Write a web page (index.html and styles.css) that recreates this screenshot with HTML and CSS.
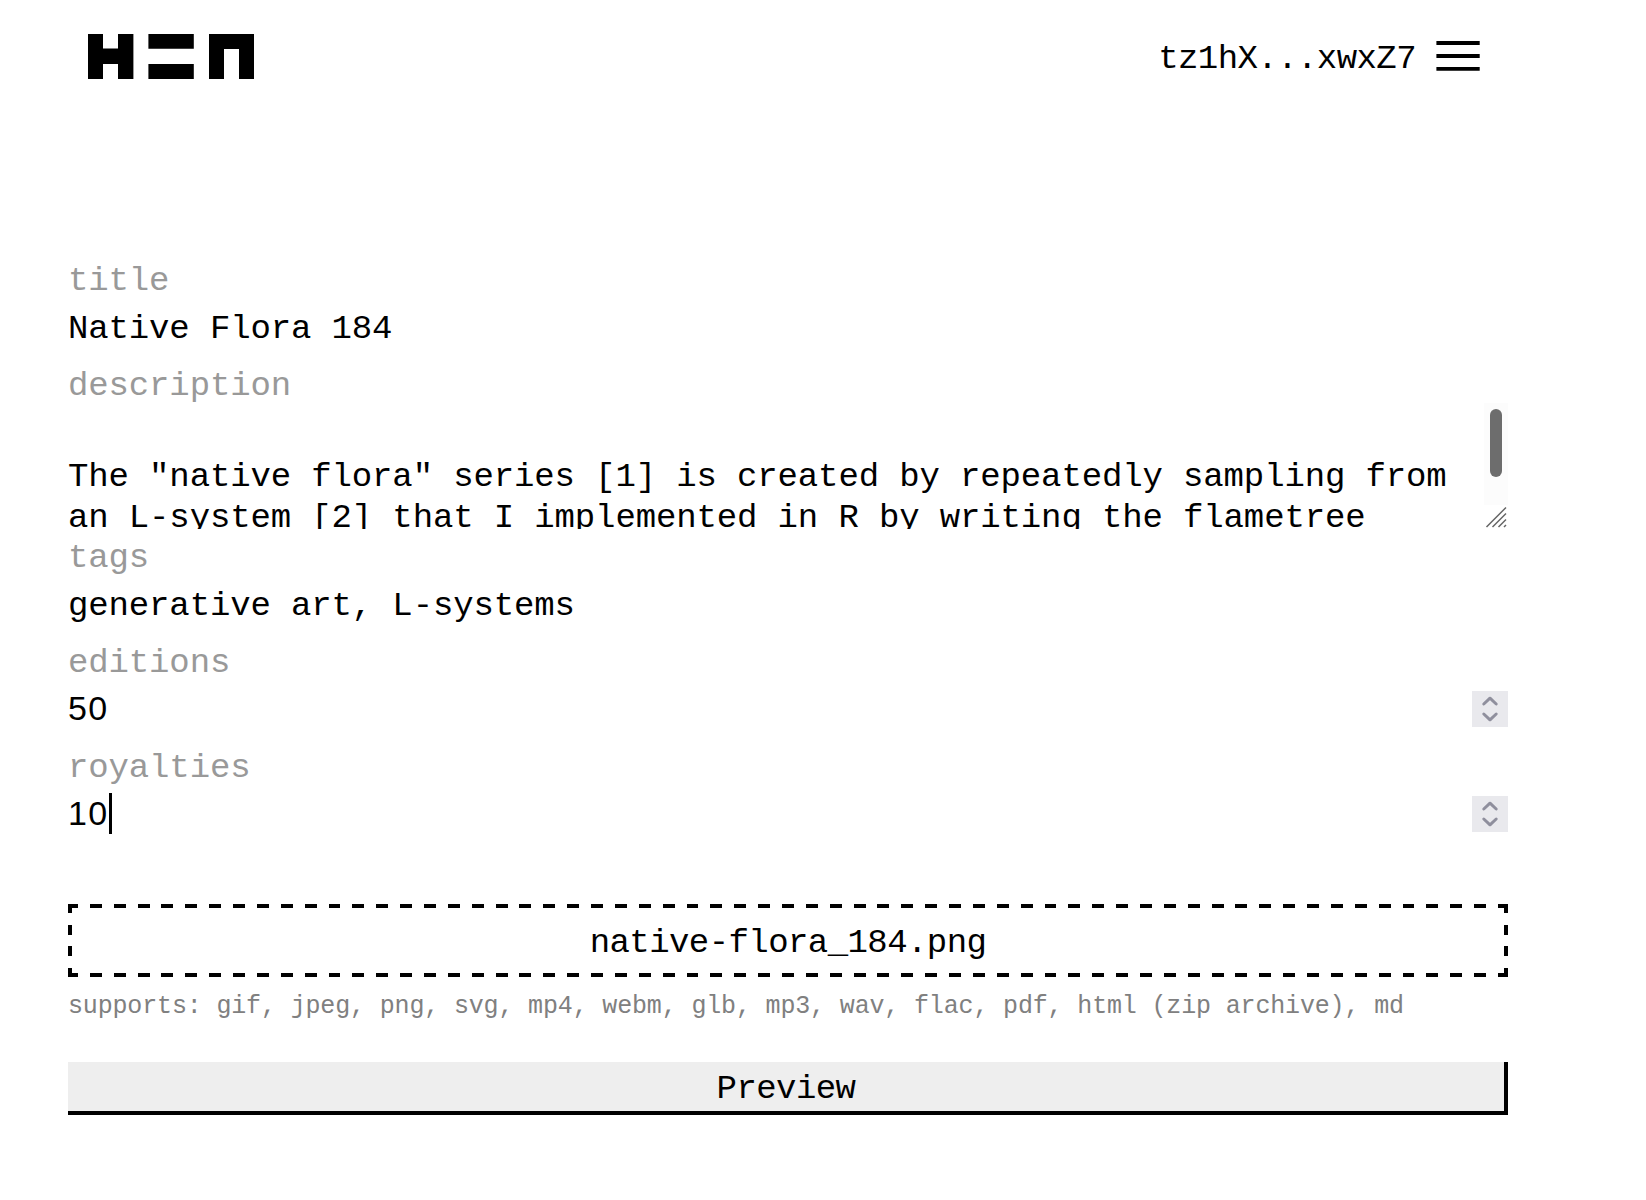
FILE: index.html
```html
<!DOCTYPE html>
<html lang="en">
<head>
<meta charset="utf-8">
<title>HEN – mint</title>
<link rel="stylesheet" href="styles.css">
</head>
<body>
<header class="header">
  <svg class="logo" width="166" height="45" viewBox="0 0 166 45" role="img" aria-label="HEN">
    <path d="M0 0H15V14.6H30V0H45.4V45H30V30H15V45H0Z"/>
    <path d="M60.4 0H105.8V14.8H60.4ZM60.4 30H105.8V45H60.4Z"/>
    <path d="M121 0H166V45H151V15H136V45H121Z"/>
  </svg>
  <div class="account">
    <span class="address">tz1hX...xwxZ7</span>
    <svg class="menu" width="44" height="30" viewBox="0 0 44 30">
      <path d="M.4 0H43.7V4H.4ZM.4 13H43.7V17H.4ZM.4 26H43.7V29.8H.4Z"/>
    </svg>
  </div>
</header>
<main class="form">
  <div class="field">
    <div class="label">title</div>
    <div class="value">Native Flora 184</div>
  </div>
  <div class="field field-description">
    <div class="label">description</div>
    <div class="textarea">
      <div class="textarea-text">The "native flora" series [1] is created by repeatedly sampling from<br>an L-system [2] that I implemented in R by writing the flametree</div>
      <div class="scroll">
        <div class="track"><div class="thumb"></div></div>
        <svg class="resizer" width="24" height="24" viewBox="0 0 24 24">
          <path d="M2.5 22L22 2.5M8.5 22L22 8.5M14.5 22L22 14.5M20 22L22 20"/>
        </svg>
      </div>
    </div>
  </div>
  <div class="field">
    <div class="label">tags</div>
    <div class="value">generative art, L-systems</div>
  </div>
  <div class="field">
    <div class="label">editions</div>
    <div class="value number"><span>50</span>
      <svg class="spinner" width="36" height="36" viewBox="0 0 36 36"><path d="M11.8 13L18 7.2L24.2 13M11.8 23L18 28.8L24.2 23"/></svg>
    </div>
  </div>
  <div class="field">
    <div class="label">royalties</div>
    <div class="value number"><span class="focused">10</span>
      <svg class="spinner" width="36" height="36" viewBox="0 0 36 36"><path d="M11.8 13L18 7.2L24.2 13M11.8 23L18 28.8L24.2 23"/></svg>
    </div>
  </div>
  <div class="upload">native-flora_184.png</div>
  <div class="supports">supports: gif, jpeg, png, svg, mp4, webm, glb, mp3, wav, flac, pdf, html (zip archive), md</div>
  <button class="preview">Preview</button>
</main>
</body>
</html>
```
FILE: styles.css
```css
* { box-sizing: border-box; }
body {
  margin: 0;
  background: #fff;
  color: #000;
  font-family: "Liberation Mono", monospace;
  font-size: 34px;
  line-height: 41px;
  letter-spacing: -0.13px;
}
svg { display: block; }
.header {
  display: flex;
  justify-content: space-between;
  align-items: flex-start;
  height: 261px;
  padding: 34px 166px 0 88px;
}
.account { display: flex; padding-top: 5px; gap: 20px; }
.address { letter-spacing: -0.57px; }
.menu { margin-top: 2px; }
.form { width: 1440px; margin-left: 68px; }
.field { margin-bottom: 16px; }
.label { color: #999; margin-bottom: 7px; }
.value { height: 41px; white-space: pre; }
.field-description { margin-bottom: 9px; }
.field-description .label { margin-bottom: 0; height: 37px; }
.textarea {
  display: flex;
  justify-content: space-between;
  height: 126px;
  overflow: hidden;
}
.textarea-text { padding-top: 54px; white-space: nowrap; }
.scroll { width: 24px; }
.track { height: 102px; padding: 6px; background: #fcfcfc; }
.thumb { width: 12px; height: 68px; border-radius: 6px; background: #6d6d6d; }
.resizer { fill: none; stroke: #666; stroke-width: 1.5; }
.number {
  display: flex;
  justify-content: space-between;
  font-family: "Liberation Sans", sans-serif;
  line-height: 35px;
  letter-spacing: 1.4px;
}
.spinner {
  background: #e9e9ed;
  fill: none;
  stroke: #8f8f9d;
  stroke-width: 3;
  stroke-linecap: round;
  stroke-linejoin: round;
}
.focused { position: relative; }
.focused::after {
  content: "";
  position: absolute;
  left: 41px;
  top: -3px;
  width: 3px;
  height: 41px;
  background: #000;
}
.upload {
  --dash-x: repeating-linear-gradient(90deg, #000 0 11.93px, transparent 11.93px 23.867px);
  --dash-y: repeating-linear-gradient(180deg, #000 0 9.8px, transparent 9.8px 21.6px);
  height: 73px;
  margin-top: 67px;
  padding-top: 19px;
  text-align: center;
  letter-spacing: -0.57px;
  background:
    var(--dash-x) -2px 0 / 1444px 4px no-repeat,
    var(--dash-x) -2px 100% / 1444px 4px no-repeat,
    var(--dash-y) 0 -0.8px / 4px 75px no-repeat,
    var(--dash-y) 100% -0.8px / 4px 75px no-repeat;
}
.supports {
  margin-top: 9px;
  height: 76px;
  color: #808080;
  font-size: 25px;
  letter-spacing: -0.16px;
  white-space: nowrap;
}
.preview {
  display: block;
  width: 100%;
  height: 53px;
  margin: 0;
  padding: 5px 0 0;
  border: solid #000;
  border-width: 0 4px 4px 0;
  background: #eee;
  color: #000;
  font: inherit;
  letter-spacing: -0.57px;
}
```
